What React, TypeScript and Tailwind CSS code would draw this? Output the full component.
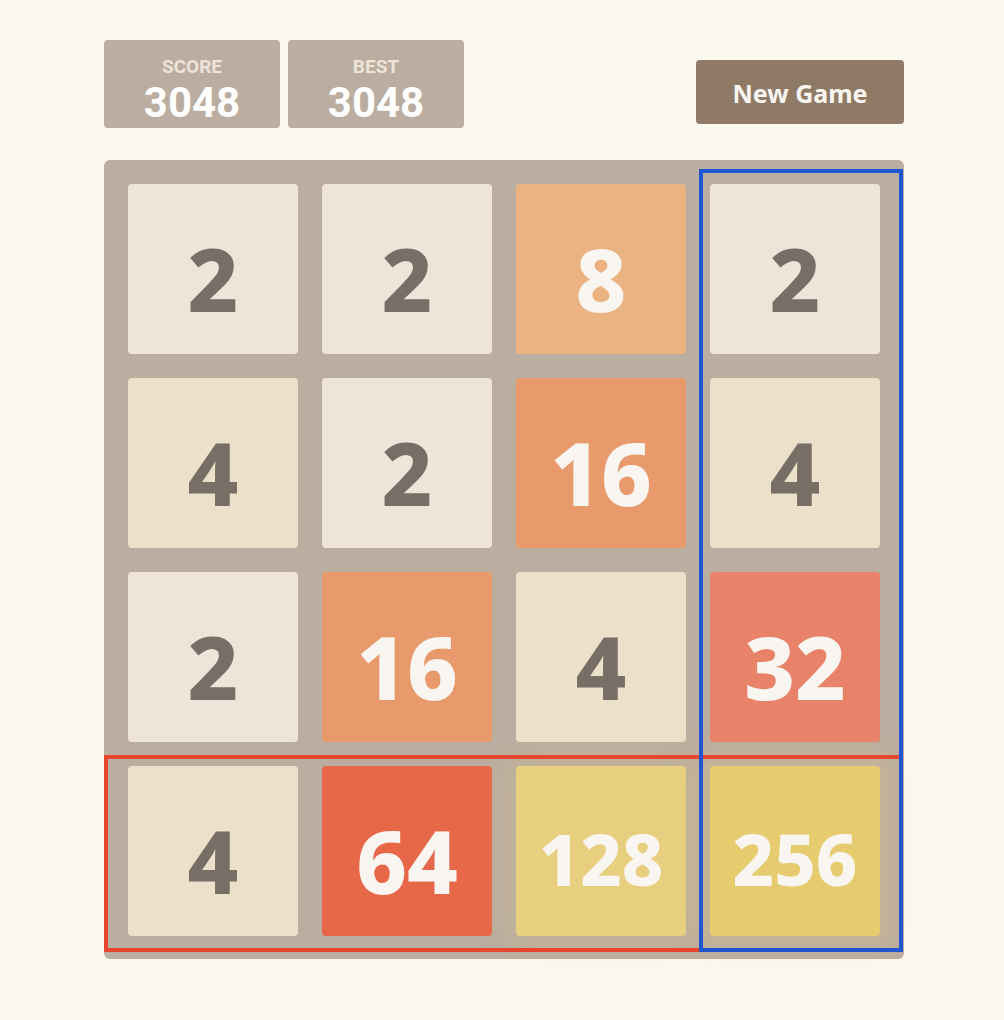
const board = [
  [2, 2, 8, 2],
  [4, 2, 16, 4],
  [2, 16, 4, 32],
  [4, 64, 128, 256],
];

const tileStyle: Record<number, string> = {
  2: 'bg-[#eee4da] text-[#776e65]',
  4: 'bg-[#ece0ca] text-[#776e65]',
  8: 'bg-[#eab381] text-[#f9f6f2]',
  16: 'bg-[#e89a6c] text-[#f9f6f2]',
  32: 'bg-[#e8836a] text-[#f9f6f2]',
  64: 'bg-[#e76848] text-[#f9f6f2]',
  128: 'bg-[#e8cf7f] text-[#f9f6f2] shadow-[0_0_30px_10px_rgba(243,215,116,0.15)]',
  256: 'bg-[#e7cb6f] text-[#f9f6f2] shadow-[0_0_30px_10px_rgba(243,215,116,0.24)]',
};

function Tile({ value }: { value: number }) {
  const size = value >= 100 ? 'text-[72px] pt-[14px]' : 'text-[88px] pt-[18px]';
  return (
    <div
      className={`w-[170px] h-[170px] rounded-[4px] flex items-center justify-center font-extrabold leading-none ${size} ${tileStyle[value]}`}
    >
      {value}
    </div>
  );
}

function ScoreBox({ label, value }: { label: string; value: number }) {
  return (
    <div className="w-[176px] h-[88px] bg-[#bbada0] rounded-[4px] flex flex-col items-center pt-[16px] font-['Roboto',sans-serif]">
      <div className="text-[19px] font-bold leading-[22px] text-[#eee4da]">{label}</div>
      <div className="text-[42px] font-bold leading-[49px] text-white">{value}</div>
    </div>
  );
}

export default function App() {
  return (
    <div
      className="min-h-screen bg-[#faf8ef] pt-[40px] pl-[104px]"
      style={{ fontFamily: '"Noto Sans", "Open Sans", Arial, sans-serif' }}
    >
      <div className="w-[800px]">
        <div className="flex justify-between items-start">
          <div className="flex gap-2">
            <ScoreBox label="SCORE" value={3048} />
            <ScoreBox label="BEST" value={3048} />
          </div>
          <button className="mt-[20px] w-[208px] h-[64px] pt-[3px] rounded-[4px] bg-[#8f7a66] text-[#f9f6f2] text-[25px] font-bold">
            New Game
          </button>
        </div>

        <div className="relative mt-[32px] w-[800px] h-[799px] bg-[#bbada0] rounded-[6px] p-[24px]">
          <div className="grid grid-cols-4 gap-[24px]">
            {board.flat().map((v, i) => (
              <Tile key={i} value={v} />
            ))}
          </div>
          <div className="absolute left-0 top-[595px] w-[799px] h-[197px] border-4 border-[#e8462e] pointer-events-none" />
          <div className="absolute left-[595px] top-[9px] w-[204px] h-[783px] border-4 border-[#2056d2] pointer-events-none" />
        </div>
      </div>
    </div>
  );
}
